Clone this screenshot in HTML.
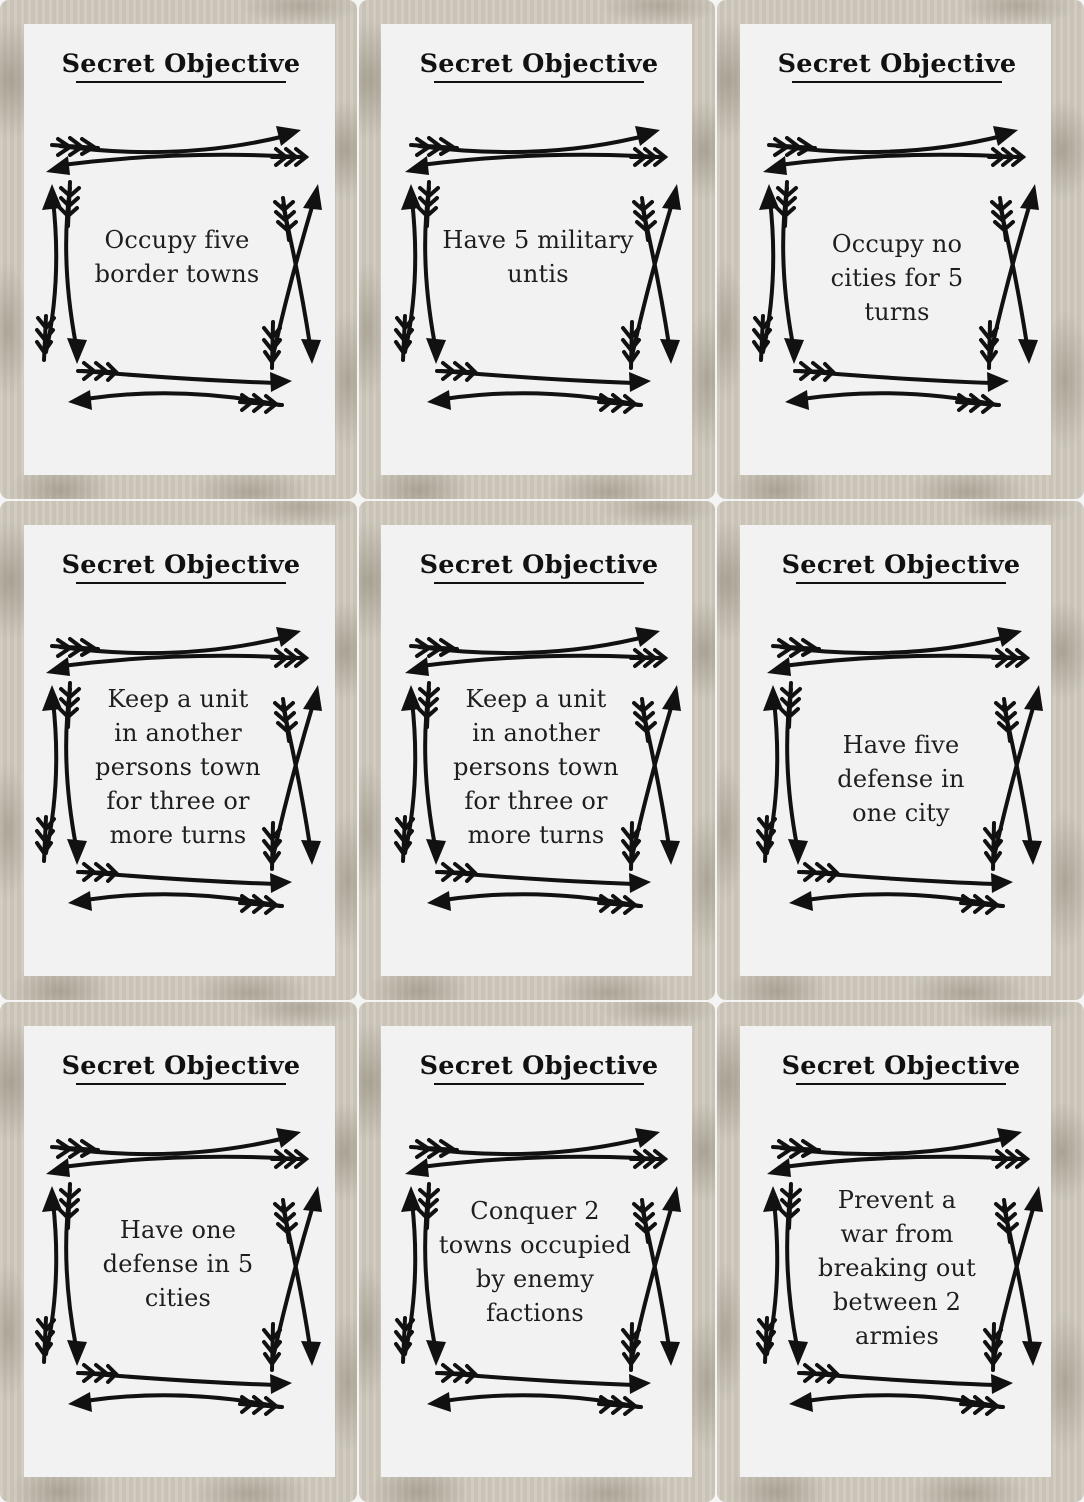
<!DOCTYPE html>
<html><head><meta charset="utf-8">
<style>
*{margin:0;padding:0;box-sizing:border-box}
body{width:1084px;height:1502px;background:#f4f4f4;position:relative;overflow:hidden}
.card{position:absolute;border-radius:9px;overflow:hidden;
background:
radial-gradient(ellipse 40px 60px at 10px 80px,rgba(140,132,118,.55),transparent),
radial-gradient(ellipse 30px 50px at 345px 150px,rgba(140,132,118,.55),transparent),
radial-gradient(ellipse 50px 30px at 60px 490px,rgba(140,132,118,.55),transparent),
radial-gradient(ellipse 60px 25px at 250px 492px,rgba(140,132,118,.5),transparent),
radial-gradient(ellipse 25px 70px at 348px 380px,rgba(140,132,118,.5),transparent),
radial-gradient(ellipse 20px 70px at 8px 330px,rgba(140,132,118,.5),transparent),
radial-gradient(ellipse 60px 20px at 300px 6px,rgba(140,132,118,.45),transparent),
repeating-linear-gradient(90deg,rgba(255,255,255,.06) 0 3px,rgba(0,0,0,.03) 3px 7px),
#cfc9bd}
.inner{position:absolute;left:24px;top:24px;width:311px;height:451px;background:#f2f2f2}
.title{position:absolute;top:49px;width:260px;text-align:center;font:bold 25.5px "DejaVu Serif","Liberation Serif",serif;color:#111;letter-spacing:0.3px}
.ul{position:absolute;top:81px;width:210px;height:1.5px;background:#111}
.body{position:absolute;width:260px;text-align:center;font:24px/34px "DejaVu Serif","Liberation Serif",serif;color:#1e1e1e;letter-spacing:0.2px}
svg.fr{position:absolute;left:0;top:0}
</style></head><body>
<svg width="0" height="0" style="position:absolute">
<defs>
<symbol id="f" viewBox="0 0 358 500">
<g fill="none" stroke="#111" stroke-width="4" stroke-linecap="round">
<path d="M60,146 Q180,162 285,136"/>
<path d="M58,139 L70,147 L58,155 M70,138 L82,147 L70,155 M82,139 L94,147 L82,154 M52,145 L98,148"/>
<path d="M62,165 Q180,150 300,157"/>
<path d="M276,149 L286,157 L276,165 M286,149 L296,157 L286,165 M296,149 L306,157 L296,165 M272,157 L306,157"/>
<path d="M53,200 Q62,280 46,352"/>
<path d="M38,318 L46,328 L54,318 M37,330 L45,340 L53,330 M37,342 L44,352 L51,342 M46,316 L44,360"/>
<path d="M70,188 Q60,260 76,345"/>
<path d="M61,188 L70,196 L79,188 M61,198 L69,206 L78,198 M60,208 L68,216 L77,208 M70,182 L68,226"/>
<path d="M314,200 Q290,280 273,356"/>
<path d="M264,328 L272,338 L280,328 M264,340 L272,350 L280,340 M265,352 L272,362 L279,352 M273,322 L272,368"/>
<path d="M283,205 Q300,280 310,345"/>
<path d="M275,202 L284,210 L293,202 M276,212 L285,220 L294,212 M278,222 L287,230 L296,222 M283,198 L289,240"/>
<path d="M82,371 Q190,380 275,383"/>
<path d="M84,363 L94,371 L84,379 M96,363 L106,371 L96,379 M108,364 L116,372 L108,380 M78,371 L116,372"/>
<path d="M85,399 Q180,385 280,405"/>
<path d="M242,395 L252,402 L242,410 M254,395 L264,403 L254,411 M266,396 L276,404 L266,412 M240,402 L282,405"/>
</g>
<g fill="#111">
<polygon points="301,130 276,126 281,146"/>
<polygon points="46,172 68,156 70,175"/>
<polygon points="52,184 42,210 62,208"/>
<polygon points="77,364 67,338 87,340"/>
<polygon points="318,184 303,208 322,210"/>
<polygon points="312,364 301,339 321,340"/>
<polygon points="292,381 270,372 271,392"/>
<polygon points="68,402 90,390 92,410"/>
</g>
</symbol>
</defs>
</svg>

<!-- Row 1 -->
<div class="card" style="left:0;top:0;width:357px;height:499px"><div class="inner"></div>
<div class="title" style="left:51px">Secret Objective</div><div class="ul" style="left:76px"></div>
<svg class="fr" width="358" height="500"><use href="#f"/></svg>
<div class="body" style="left:47px;top:223px">Occupy five<br>border towns</div></div>

<div class="card" style="left:359px;top:0;width:356px;height:499px"><div class="inner" style="left:22px"></div>
<div class="title" style="left:50px">Secret Objective</div><div class="ul" style="left:75px"></div>
<svg class="fr" width="358" height="500"><use href="#f"/></svg>
<div class="body" style="left:49px;top:223px">Have 5 military<br>untis</div></div>

<div class="card" style="left:717px;top:0;width:367px;height:499px"><div class="inner" style="left:23px"></div>
<div class="title" style="left:50px">Secret Objective</div><div class="ul" style="left:75px"></div>
<svg class="fr" width="358" height="500"><use href="#f"/></svg>
<div class="body" style="left:50px;top:227px">Occupy no<br>cities for 5<br>turns</div></div>

<!-- Row 2 -->
<div class="card" style="left:0;top:501px;width:357px;height:499px"><div class="inner"></div>
<div class="title" style="left:51px">Secret Objective</div><div class="ul" style="left:76px"></div>
<svg class="fr" width="358" height="500"><use href="#f"/></svg>
<div class="body" style="left:48px;top:181px">Keep a unit<br>in another<br>persons town<br>for three or<br>more turns</div></div>

<div class="card" style="left:359px;top:501px;width:356px;height:499px"><div class="inner" style="left:22px"></div>
<div class="title" style="left:50px">Secret Objective</div><div class="ul" style="left:75px"></div>
<svg class="fr" width="358" height="500"><use href="#f"/></svg>
<div class="body" style="left:47px;top:181px">Keep a unit<br>in another<br>persons town<br>for three or<br>more turns</div></div>

<div class="card" style="left:717px;top:501px;width:367px;height:499px"><div class="inner" style="left:23px"></div>
<div class="title" style="left:54px">Secret Objective</div><div class="ul" style="left:79px"></div>
<svg class="fr" width="358" height="500"><use href="#f" x="4"/></svg>
<div class="body" style="left:54px;top:227px">Have five<br>defense in<br>one city</div></div>

<!-- Row 3 -->
<div class="card" style="left:0;top:1002px;width:357px;height:500px"><div class="inner"></div>
<div class="title" style="left:51px">Secret Objective</div><div class="ul" style="left:76px"></div>
<svg class="fr" width="358" height="500"><use href="#f"/></svg>
<div class="body" style="left:48px;top:211px">Have one<br>defense in 5<br>cities</div></div>

<div class="card" style="left:359px;top:1002px;width:356px;height:500px"><div class="inner" style="left:22px"></div>
<div class="title" style="left:50px">Secret Objective</div><div class="ul" style="left:75px"></div>
<svg class="fr" width="358" height="500"><use href="#f"/></svg>
<div class="body" style="left:46px;top:192px">Conquer 2<br>towns occupied<br>by enemy<br>factions</div></div>

<div class="card" style="left:717px;top:1002px;width:367px;height:500px"><div class="inner" style="left:23px"></div>
<div class="title" style="left:54px">Secret Objective</div><div class="ul" style="left:79px"></div>
<svg class="fr" width="358" height="500"><use href="#f" x="4"/></svg>
<div class="body" style="left:50px;top:181px">Prevent a<br>war from<br>breaking out<br>between 2<br>armies</div></div>
</body></html>
